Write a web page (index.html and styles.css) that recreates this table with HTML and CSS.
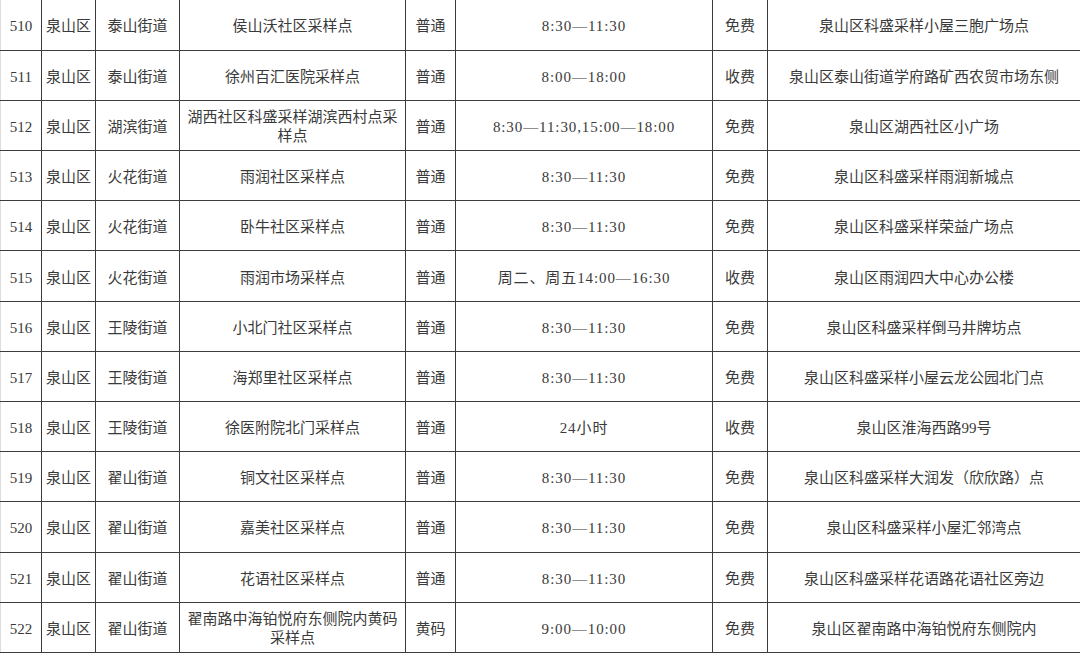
FILE: index.html
```html
<!DOCTYPE html>
<html lang="zh-CN">
<head>
<meta charset="utf-8">
<title>采样点</title>
<link rel="stylesheet" href="styles.css">
</head>
<body>
<table class="sites">
  <colgroup>
    <col class="c-no"><col class="c-dist"><col class="c-street"><col class="c-name"><col class="c-type"><col class="c-time"><col class="c-fee"><col class="c-addr">
  </colgroup>
  <tbody>
    <tr><td>510</td><td>泉山区</td><td>泰山街道</td><td>侯山沃社区采样点</td><td>普通</td><td class="time">8:30—11:30</td><td>免费</td><td>泉山区科盛采样小屋三胞广场点</td></tr>
    <tr><td>511</td><td>泉山区</td><td>泰山街道</td><td>徐州百汇医院采样点</td><td>普通</td><td class="time">8:00—18:00</td><td>收费</td><td>泉山区泰山街道学府路矿西农贸市场东侧</td></tr>
    <tr><td>512</td><td>泉山区</td><td>湖滨街道</td><td>湖西社区科盛采样湖滨西村点采样点</td><td>普通</td><td class="time">8:30—11:30,15:00—18:00</td><td>免费</td><td>泉山区湖西社区小广场</td></tr>
    <tr><td>513</td><td>泉山区</td><td>火花街道</td><td>雨润社区采样点</td><td>普通</td><td class="time">8:30—11:30</td><td>免费</td><td>泉山区科盛采样雨润新城点</td></tr>
    <tr><td>514</td><td>泉山区</td><td>火花街道</td><td>卧牛社区采样点</td><td>普通</td><td class="time">8:30—11:30</td><td>免费</td><td>泉山区科盛采样荣益广场点</td></tr>
    <tr><td>515</td><td>泉山区</td><td>火花街道</td><td>雨润市场采样点</td><td>普通</td><td class="time">周二、周五14:00—16:30</td><td>收费</td><td>泉山区雨润四大中心办公楼</td></tr>
    <tr><td>516</td><td>泉山区</td><td>王陵街道</td><td>小北门社区采样点</td><td>普通</td><td class="time">8:30—11:30</td><td>免费</td><td>泉山区科盛采样倒马井牌坊点</td></tr>
    <tr><td>517</td><td>泉山区</td><td>王陵街道</td><td>海郑里社区采样点</td><td>普通</td><td class="time">8:30—11:30</td><td>免费</td><td>泉山区科盛采样小屋云龙公园北门点</td></tr>
    <tr><td>518</td><td>泉山区</td><td>王陵街道</td><td>徐医附院北门采样点</td><td>普通</td><td class="time">24小时</td><td>收费</td><td>泉山区淮海西路99号</td></tr>
    <tr><td>519</td><td>泉山区</td><td>翟山街道</td><td>铜文社区采样点</td><td>普通</td><td class="time">8:30—11:30</td><td>免费</td><td>泉山区科盛采样大润发（欣欣路）点</td></tr>
    <tr><td>520</td><td>泉山区</td><td>翟山街道</td><td>嘉美社区采样点</td><td>普通</td><td class="time">8:30—11:30</td><td>免费</td><td>泉山区科盛采样小屋汇邻湾点</td></tr>
    <tr><td>521</td><td>泉山区</td><td>翟山街道</td><td>花语社区采样点</td><td>普通</td><td class="time">8:30—11:30</td><td>免费</td><td>泉山区科盛采样花语路花语社区旁边</td></tr>
    <tr><td>522</td><td>泉山区</td><td>翟山街道</td><td>翟南路中海铂悦府东侧院内黄码采样点</td><td>黄码</td><td class="time">9:00—10:00</td><td>免费</td><td>泉山区翟南路中海铂悦府东侧院内</td></tr>
  </tbody>
</table>
</body>
</html>
```

FILE: styles.css
```css
html, body {
  margin: 0;
  padding: 0;
  background: #ffffff;
}

body {
  width: 1080px;
  height: 654px;
  overflow: hidden;
}

.sites {
  width: 1080px;
  table-layout: fixed;
  border-collapse: collapse;
  font-family: "Liberation Serif", "Noto Sans CJK SC", serif;
  font-size: 15px;
  color: #3a3a3a;
}

.c-no { width: 41px; }
.c-dist { width: 54px; }
.c-street { width: 84px; }
.c-name { width: 226px; }
.c-type { width: 50px; }
.c-time { width: 257px; }
.c-fee { width: 55px; }
.c-addr { width: 313px; }

.sites tr {
  height: 50.2px;
}

.sites td {
  border: 1px solid #3c3c3c;
  padding: 4px 1px 0;
  text-align: center;
  vertical-align: middle;
  line-height: 19px;
  overflow: hidden;
}

.sites tr:first-child td {
  border-top: none;
}

.sites td:first-child {
  border-left-color: #dddddd;
}

.sites td:last-child {
  border-right-color: #dddddd;
}

.sites .time {
  letter-spacing: 0.9px;
}
```
